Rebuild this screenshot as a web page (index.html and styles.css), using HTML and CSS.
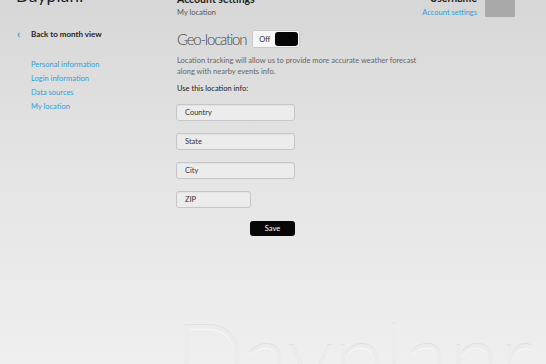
FILE: index.html
```html
<!DOCTYPE html>
<html lang="en">
<head>
    <meta charset="UTF-8">
    <meta name="viewport" content="width=device-width, initial-scale=1.0">
    <title>Dayplanr - My location</title>
    <link rel="stylesheet" href="styles.css">
</head>
<body>
    <div class="topbar">
        <div class="logo">Dayplanr</div>
        <div class="page-title">
            <h1>Account settings</h1>
            <div class="crumb">My location</div>
        </div>
        <div class="user-box">
            <div class="user-name">Username</div>
            <a href="#" class="user-link">Account settings</a>
        </div>
        <div class="avatar"></div>
    </div>

    <div class="layout">
        <nav class="sidebar">
            <a href="#" class="back-link"><span class="chev">&lsaquo;</span>Back to month view</a>
            <ul class="side-menu">
                <li><a href="#">Personal information</a></li>
                <li><a href="#">Login information</a></li>
                <li><a href="#">Data sources</a></li>
                <li><a href="#" class="active">My location</a></li>
            </ul>
        </nav>

        <main class="content">
            <div class="geo-row">
                <h2>Geo-location</h2>
                <div class="toggle">
                    <span class="toggle-label">Off</span>
                    <span class="toggle-knob"></span>
                </div>
            </div>
            <p class="note">Location tracking will allow us to provide more accurate weather forecast<br>along with nearby events info.</p>
            <p class="label">Use this location info:</p>

            <form class="loc-form">
                <input type="text" class="field" placeholder="Country">
                <input type="text" class="field" placeholder="State">
                <input type="text" class="field" placeholder="City">
                <input type="text" class="field field-short" placeholder="ZIP">
                <button type="button" class="save-btn">Save</button>
            </form>

            <div class="watermark">Dayplanr</div>
        </main>
    </div>
</body>
</html>
```

FILE: styles.css
```css
html, body {
    margin: 0;
    padding: 0;
    height: 100%;
}
body {
    overflow: hidden;
    font-family: "Lato", "Open Sans", sans-serif;
    background: linear-gradient(to bottom, #d7d7d7 0%, #e4e4e4 45%, #efefef 100%);
    color: #333;
}
a {
    text-decoration: none;
}

    .topbar {
        display: flex;
        align-items: flex-start;
        margin-top: -14px;
        height: 31px;
    }
    .logo {
        width: 161px;
        flex-shrink: 0;
        padding-left: 16px;
        font-size: 17px;
        line-height: 20px;
        color: #222;
        letter-spacing: 0.3px;
    }
    .page-title {
        flex: 1;
        padding-top: 3px;
    }
    .page-title h1 {
        margin: 0;
        font-size: 10.5px;
        font-weight: 700;
        line-height: 20px;
        color: #222;
    }
    .crumb {
        font-size: 7.5px;
        color: #555;
        line-height: 12px;
        margin-top: -2px;
    }
    .user-box {
        text-align: right;
        padding-top: 5px;
    }
    .user-name {
        font-size: 10.5px;
        font-weight: 700;
        color: #222;
        line-height: 14px;
    }
    .user-link {
        display: block;
        font-size: 7.5px;
        color: #2e9fdb;
        line-height: 12px;
        margin-top: 2px;
    }
    .avatar {
        width: 30px;
        height: 31px;
        margin-left: 8px;
        margin-right: 31px;
        background: #a9a9a9;
    }

    .layout {
        display: flex;
    }
    .sidebar {
        flex-shrink: 0;
        width: 159px;
        padding-left: 17px;
        padding-top: 11px;
    }
    .back-link {
        display: flex;
        align-items: center;
        font-size: 8px;
        font-weight: 700;
        color: #222;
        line-height: 12px;
    }
    .chev {
        width: 14px;
        color: #2e9fdb;
        font-size: 11px;
        font-weight: 700;
        line-height: 10px;
    }
    .side-menu {
        list-style: none;
        margin: 18px 0 0 14px;
        padding: 0;
    }
    .side-menu li {
        font-size: 7.5px;
        line-height: 14px;
    }
    .side-menu a {
        color: #2e9fdb;
    }

    .content {
        flex: 1;
        min-width: 0;
        padding-left: 1px;
    }
    .geo-row {
        display: flex;
        align-items: center;
        gap: 6px;
        margin-top: 10px;
    }
    .geo-row h2 {
        margin: 0;
        font-size: 15px;
        font-weight: 300;
        color: #4a4a4a;
        letter-spacing: -1.2px;
        line-height: 24px;
    }
    .toggle {
        display: flex;
        align-items: center;
        justify-content: space-between;
        width: 44px;
        height: 14px;
        padding: 1px;
        background: #f6f6f6;
        border: 1px solid #c9c9c9;
        border-radius: 2px;
    }
    .toggle-label {
        font-size: 7.5px;
        color: #333;
        padding-left: 5px;
    }
    .toggle-knob {
        width: 23px;
        height: 14px;
        background: #050505;
        border-radius: 3px;
    }
    .note {
        margin: 4px 0 0;
        font-size: 7.5px;
        line-height: 11px;
        color: #666;
    }
    .label {
        margin: 6px 0 0;
        font-size: 7.5px;
        color: #222;
        line-height: 11px;
    }
    .loc-form {
        display: flex;
        flex-direction: column;
        align-items: flex-start;
        margin-top: 10px;
        margin-left: -1px;
        gap: 12px;
    }
    .field {
        box-sizing: border-box;
        width: 119px;
        height: 17px;
        padding: 0 8px;
        border: 1px solid #c6c6c6;
        border-radius: 3px;
        background: #ececec;
        font-family: inherit;
        font-size: 7.5px;
        box-shadow: inset 0 1px 1px rgba(0,0,0,0.04);
    }
    .field::placeholder {
        color: #333;
    }
    .field-short {
        width: 75px;
    }
    .save-btn {
        margin-left: 74px;
        margin-top: 1px;
        width: 45px;
        height: 15px;
        padding: 0;
        background: #070707;
        color: #fff;
        border: none;
        border-radius: 3px;
        font-family: inherit;
        font-size: 7.5px;
        cursor: pointer;
    }
    .watermark {
        margin-top: 74px;
        margin-left: -2px;
        font-size: 92px;
        font-weight: 300;
        line-height: 1;
        color: #ececec;
        white-space: nowrap;
        text-shadow: 0 1px 0 #f8f8f8, 0 -1px 0 #e0e0e0;
    }
```
